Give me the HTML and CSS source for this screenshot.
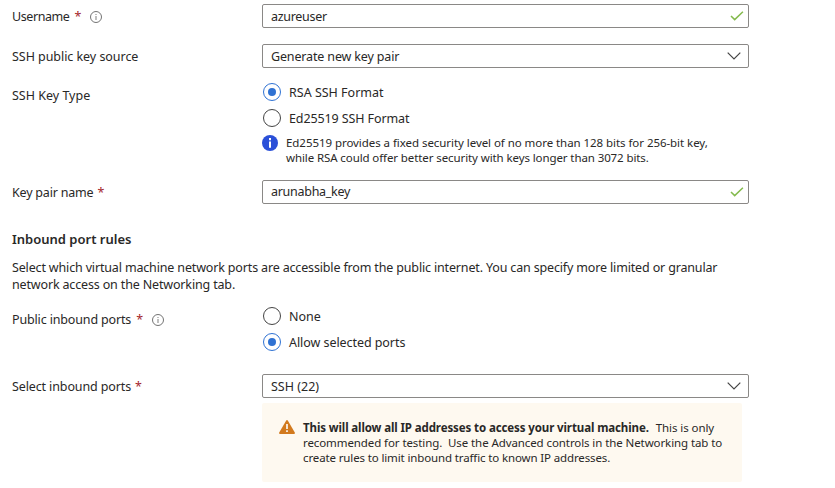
FILE: index.html
```html
<!DOCTYPE html>
<html lang="en">
<head>
<meta charset="utf-8">
<title>Create a virtual machine</title>
<link rel="stylesheet" href="styles.css">
</head>
<body>
<svg class="defs" width="0" height="0" aria-hidden="true">
  <symbol id="check" viewBox="0 0 14 10"><path d="M1 5 L4.7 8.6 L12.9 .8" fill="none" stroke="#84ba4d" stroke-width="1.5"/></symbol>
  <symbol id="chevron" viewBox="0 0 14 8"><path d="M.7 .7 L7 7 L13.3 .7" fill="none" stroke="#444" stroke-width="1.2"/></symbol>
  <symbol id="info" viewBox="0 0 12 12"><circle cx="6" cy="6" r="5.5" fill="none" stroke="#737373"/><path d="M6 5V9M6 3V4.1" stroke="#8a8a8a" stroke-width="1.1"/></symbol>
</svg>
<main class="form">
  <div class="row username">
    <div class="label"><span class="t-user">Username</span><b class="req">*</b><svg class="info"><use href="#info"/></svg></div>
    <div class="field"><span class="t-azure">azureuser</span><svg class="check"><use href="#check"/></svg></div>
  </div>
  <div class="row source">
    <div class="label"><span class="t-source">SSH public key source</span></div>
    <div class="field"><span class="t-generate">Generate new key pair</span><svg class="chevron"><use href="#chevron"/></svg></div>
  </div>
  <div class="row keytype">
    <div class="label"><span>SSH Key Type</span></div>
    <div class="options">
      <div class="option"><i class="radio on"></i><span>RSA SSH Format</span></div>
      <div class="option"><i class="radio"></i><span class="t-ed">Ed25519 SSH Format</span></div>
      <div class="note">
        <svg class="note-icon" viewBox="0 0 16 16"><circle cx="8" cy="8" r="8" fill="#2b50d8"/><path d="M8 6.6V12.8M8 3V5.2" stroke="#fff" stroke-width="2"/></svg>
        <p class="small"><span class="t-note1">Ed25519 provides a fixed security level of no more than 128 bits for 256-bit key,</span><br><span class="t-note2">while RSA could offer better security with keys longer than 3072 bits.</span></p>
      </div>
    </div>
  </div>
  <div class="row keyname">
    <div class="label"><span class="t-pair">Key pair name</span><b class="req near">*</b></div>
    <div class="field"><span class="t-aruna">arunabha_key</span><svg class="check"><use href="#check"/></svg></div>
  </div>
  <h2>Inbound port rules</h2>
  <p class="desc">Select which virtual machine network ports are accessible from the public internet. You can specify more limited or granular<br>network access on the Networking tab.</p>
  <div class="row public">
    <div class="label"><span class="t-public">Public inbound ports</span><b class="req">*</b><svg class="info"><use href="#info"/></svg></div>
    <div class="options">
      <div class="option"><i class="radio"></i><span>None</span></div>
      <div class="option"><i class="radio on"></i><span class="t-allow">Allow selected ports</span></div>
    </div>
  </div>
  <div class="row select">
    <div class="label"><span class="t-select">Select inbound ports</span><b class="req near">*</b></div>
    <div class="field"><span>SSH (22)</span><svg class="chevron"><use href="#chevron"/></svg></div>
  </div>
  <div class="warning">
    <svg class="warn-icon" viewBox="0 0 16 14"><path d="M7.2.6Q8 -.4 8.8 .6L15.8 12.6Q16.2 14 15 14H1Q-.2 14 .2 12.6Z" fill="#d27a1e"/><path d="M8 4V9M8 10.2V12" stroke="#fff" stroke-width="1.6"/></svg>
    <p class="small"><strong class="t-warn1">This will allow all IP addresses to access your virtual machine.</strong><span class="only">This is only</span><br><span class="t-warn2">recommended for testing.&nbsp; Use the Advanced controls in the Networking tab to</span><br><span class="t-warn3">create rules to limit inbound traffic to known IP addresses.</span></p>
  </div>
</main>
</body>
</html>
```
FILE: styles.css
```css
* { box-sizing: border-box; }
body { margin: 0; background: #fff; color: #292827; font: 12.5px/17px "Noto Sans", "Open Sans", sans-serif; }
p, h2 { margin: 0; }
svg { display: block; flex: none; }
.defs { position: absolute; }
.form { width: 749px; padding: 4px 0 0 12px; white-space: nowrap; }
.row { display: grid; grid-template-columns: 250px 487px; align-items: start; }
.label { display: flex; align-items: center; height: 24px; }
.req { color: #a4262c; font-weight: 400; margin-left: 5px; }
.req.near { margin-left: 4px; }
.info { width: 12px; height: 12px; margin: 1px 0 0 9px; }
.field { display: flex; align-items: center; justify-content: space-between; height: 24px; padding: 0 6px 0 8px; border: 1px solid #8a8886; border-radius: 2px; }
.check { width: 14px; height: 10px; margin-right: -2px; }
.chevron { width: 14px; height: 8px; margin-right: 1px; }
.source { margin-top: 16px; }
.keytype { margin-top: 15px; }
.option { display: flex; align-items: center; height: 18px; gap: 8px; padding-left: 1px; }
.option + .option { margin-top: 8px; }
.radio { display: flex; align-items: center; justify-content: center; width: 18px; height: 18px; border: 1px solid #444; border-radius: 50%; }
.radio.on { border-color: #2f72d3; }
.radio.on::after { content: ""; width: 8px; height: 8px; border-radius: 50%; background: #2f72d3; }
.note { display: flex; gap: 8px; margin-top: 8px; }
.note-icon { width: 16px; height: 16px; }
.small { font-size: 11.5px; line-height: 15px; }
.keyname { margin-top: 15px; }
h2 { margin-top: 27px; font-size: 13px; line-height: 17px; font-weight: 600; }
.desc { margin-top: 11px; letter-spacing: -.156px; }
.public { margin-top: 14px; }
.select { margin-top: 23px; }
.warning { display: flex; gap: 8px; width: 480px; height: 79px; margin: 5px 0 0 250px; padding: 17px 0 0 17px; background: #fef9f0; border-radius: 2px; }
.warn-icon { width: 16px; height: 14px; }
.only { margin-left: 7px; letter-spacing: -.08px; }

/* Tracking per text run */
.t-user { letter-spacing: -.42px; }
.t-azure { letter-spacing: -.3px; }
.t-source { letter-spacing: -.05px; }
.t-generate { letter-spacing: -.15px; }
.t-ed { letter-spacing: -.11px; }
.t-note1 { letter-spacing: -.055px; }
.t-note2 { letter-spacing: -.1px; }
.t-pair { letter-spacing: -.2px; }
.t-aruna { letter-spacing: -.28px; padding-bottom: 2px; }
.t-public { letter-spacing: -.15px; }
.t-allow { letter-spacing: -.06px; }
.t-select { letter-spacing: -.12px; }
.t-warn1 { letter-spacing: -.11px; }
.t-warn2 { letter-spacing: -.09px; }
.t-warn3 { letter-spacing: -.13px; }
```
